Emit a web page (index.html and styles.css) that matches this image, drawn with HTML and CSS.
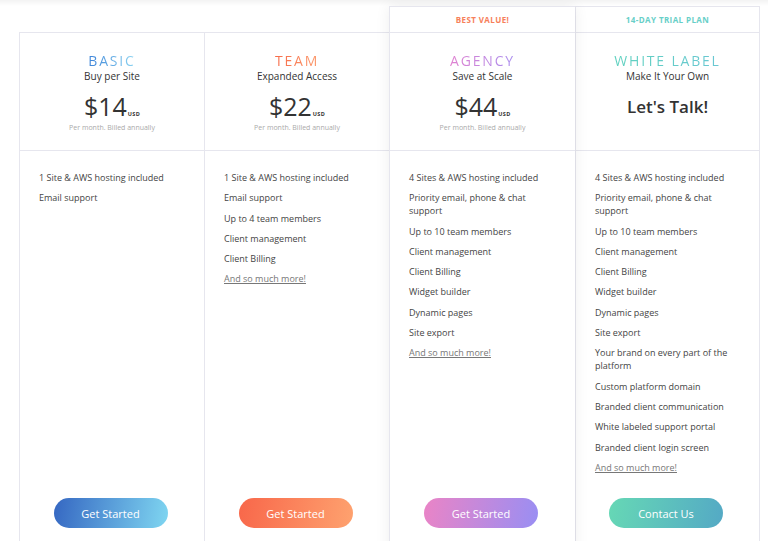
FILE: index.html
```html
<!DOCTYPE html>
<html>
<head>
<meta charset="utf-8">
<link rel="stylesheet" href="styles.css">
</head>
<body>
<div class="pricing">
  <div class="plan">
    <div class="banner empty"></div>
    <div class="card">
      <div class="head">
        <div class="name basic">BASIC</div>
        <div class="sub">Buy per Site</div>
        <div class="price">$14<span class="usd">USD</span></div>
        <div class="note">Per month. Billed annually</div>
      </div>
      <ul class="features">
        <li>1 Site &amp; AWS hosting included</li>
        <li>Email support</li>
      </ul>
      <a class="btn btn-basic">Get Started</a>
    </div>
  </div>
  <div class="plan">
    <div class="banner empty"></div>
    <div class="card">
      <div class="head">
        <div class="name team">TEAM</div>
        <div class="sub">Expanded Access</div>
        <div class="price">$22<span class="usd">USD</span></div>
        <div class="note">Per month. Billed annually</div>
      </div>
      <ul class="features">
        <li>1 Site &amp; AWS hosting included</li>
        <li>Email support</li>
        <li>Up to 4 team members</li>
        <li>Client management</li>
        <li>Client Billing</li>
        <li><a class="more">And so much more!</a></li>
      </ul>
      <a class="btn btn-team">Get Started</a>
    </div>
  </div>
  <div class="plan featured">
    <div class="banner best">BEST VALUE!</div>
    <div class="card">
      <div class="head">
        <div class="name agency">AGENCY</div>
        <div class="sub">Save at Scale</div>
        <div class="price">$44<span class="usd">USD</span></div>
        <div class="note">Per month. Billed annually</div>
      </div>
      <ul class="features">
        <li>4 Sites &amp; AWS hosting included</li>
        <li>Priority email, phone &amp; chat support</li>
        <li>Up to 10 team members</li>
        <li>Client management</li>
        <li>Client Billing</li>
        <li>Widget builder</li>
        <li>Dynamic pages</li>
        <li>Site export</li>
        <li><a class="more">And so much more!</a></li>
      </ul>
      <a class="btn btn-agency">Get Started</a>
    </div>
  </div>
  <div class="plan last">
    <div class="banner trial">14-DAY TRIAL PLAN</div>
    <div class="card">
      <div class="head">
        <div class="name white">WHITE LABEL</div>
        <div class="sub">Make It Your Own</div>
        <div class="talk">Let's Talk!</div>
      </div>
      <ul class="features">
        <li>4 Sites &amp; AWS hosting included</li>
        <li>Priority email, phone &amp; chat support</li>
        <li>Up to 10 team members</li>
        <li>Client management</li>
        <li>Client Billing</li>
        <li>Widget builder</li>
        <li>Dynamic pages</li>
        <li>Site export</li>
        <li>Your brand on every part of the platform</li>
        <li>Custom platform domain</li>
        <li>Branded client communication</li>
        <li>White labeled support portal</li>
        <li>Branded client login screen</li>
        <li><a class="more">And so much more!</a></li>
      </ul>
      <a class="btn btn-white">Contact Us</a>
    </div>
  </div>
</div>
</body>
</html>
```
FILE: styles.css
```css
html, body {
  margin: 0;
  padding: 0;
  overflow: hidden;
}
body {
  width: 768px;
  height: 541px;
  background: linear-gradient(#f3f3f3 0, #ffffff 6px);
  font-family: "Open Sans", "Noto Sans", sans-serif;
  color: #444;
}
.pricing {
  display: grid;
  grid-template-columns: 185px 185px 186px 185px;
  padding: 6px 0 0 19px;
}
.plan {
  display: flex;
  flex-direction: column;
  background: transparent;
}
.plan.featured {
  position: relative;
  z-index: 2;
  box-shadow: 0 0 14px rgba(0, 0, 0, 0.07);
}
.banner {
  height: 25px;
  display: flex;
  align-items: center;
  justify-content: center;
  font-size: 8px;
  font-weight: 700;
  letter-spacing: 0.4px;
  border: 1px solid #e6e6ee;
  border-bottom: none;
  border-right: none;
  background: #fff;
}
.banner.empty {
  border-color: transparent;
  background: transparent;
}
.plan.last .banner {
  border-right: 1px solid #e6e6ee;
}
.best { color: #f7805a; }
.trial { color: #67cfc8; }
.card {
  height: 530px;
  display: flex;
  flex-direction: column;
  border-top: 1px solid #e6e6ee;
  border-left: 1px solid #e6e6ee;
  background: #fff;
}
.plan.last .card {
  border-right: 1px solid #e6e6ee;
}
.head {
  height: 118px;
  border-bottom: 1px solid #e6e6ee;
  display: flex;
  flex-direction: column;
  align-items: center;
  padding-top: 20px;
  box-sizing: border-box;
}
.name {
  font-size: 14px;
  font-weight: 500;
  letter-spacing: 1.8px;
  line-height: 16px;
  background-clip: text;
  -webkit-background-clip: text;
  color: transparent;
}
.basic { background-image: linear-gradient(90deg, #3d83d8, #8fd6f2); }
.team { background-image: linear-gradient(90deg, #f76c4a, #fc9a6c); }
.agency { background-image: linear-gradient(90deg, #e081d0, #a98eef); }
.white { background-image: linear-gradient(90deg, #5fd1bf, #6ac7d3); }
.sub {
  font-size: 10px;
  font-weight: 500;
  color: #333;
  margin-top: 1px;
  line-height: 13px;
}
.price {
  font-size: 25px;
  color: #333;
  line-height: 24px;
  margin-top: 11px;
  font-weight: 400;
}
.usd {
  font-size: 5.5px;
  line-height: 1;
  font-weight: 700;
  margin-left: 1px;
  letter-spacing: 0.3px;
}
.note {
  font-size: 7px;
  color: #aaa;
  line-height: 10px;
  margin-top: 5px;
}
.talk {
  font-size: 17px;
  font-weight: 600;
  color: #333;
  margin-top: 12px;
  line-height: 24px;
}
.features {
  list-style: none;
  margin: 0;
  padding: 20px 19px 0 19px;
  flex: 1;
}
.features li {
  font-size: 9px;
  line-height: 13px;
  color: #444;
  margin-bottom: 7.3px;
}
.more {
  color: #777;
  text-decoration: underline;
}
.btn {
  align-self: center;
  width: 114px;
  height: 30px;
  border-radius: 15px;
  display: flex;
  align-items: center;
  justify-content: center;
  color: #fff;
  font-size: 11px;
  font-weight: 500;
  margin-bottom: 35px;
  margin-right: 3px;
}
.btn-basic { background: linear-gradient(100deg, #3567c2, #7fd6f1); }
.btn-team { background: linear-gradient(100deg, #f8674a, #fea26f); }
.btn-agency { background: linear-gradient(100deg, #ea84c6, #998ef3); }
.btn-white { background: linear-gradient(100deg, #66d8b5, #54a9c5); }
```
